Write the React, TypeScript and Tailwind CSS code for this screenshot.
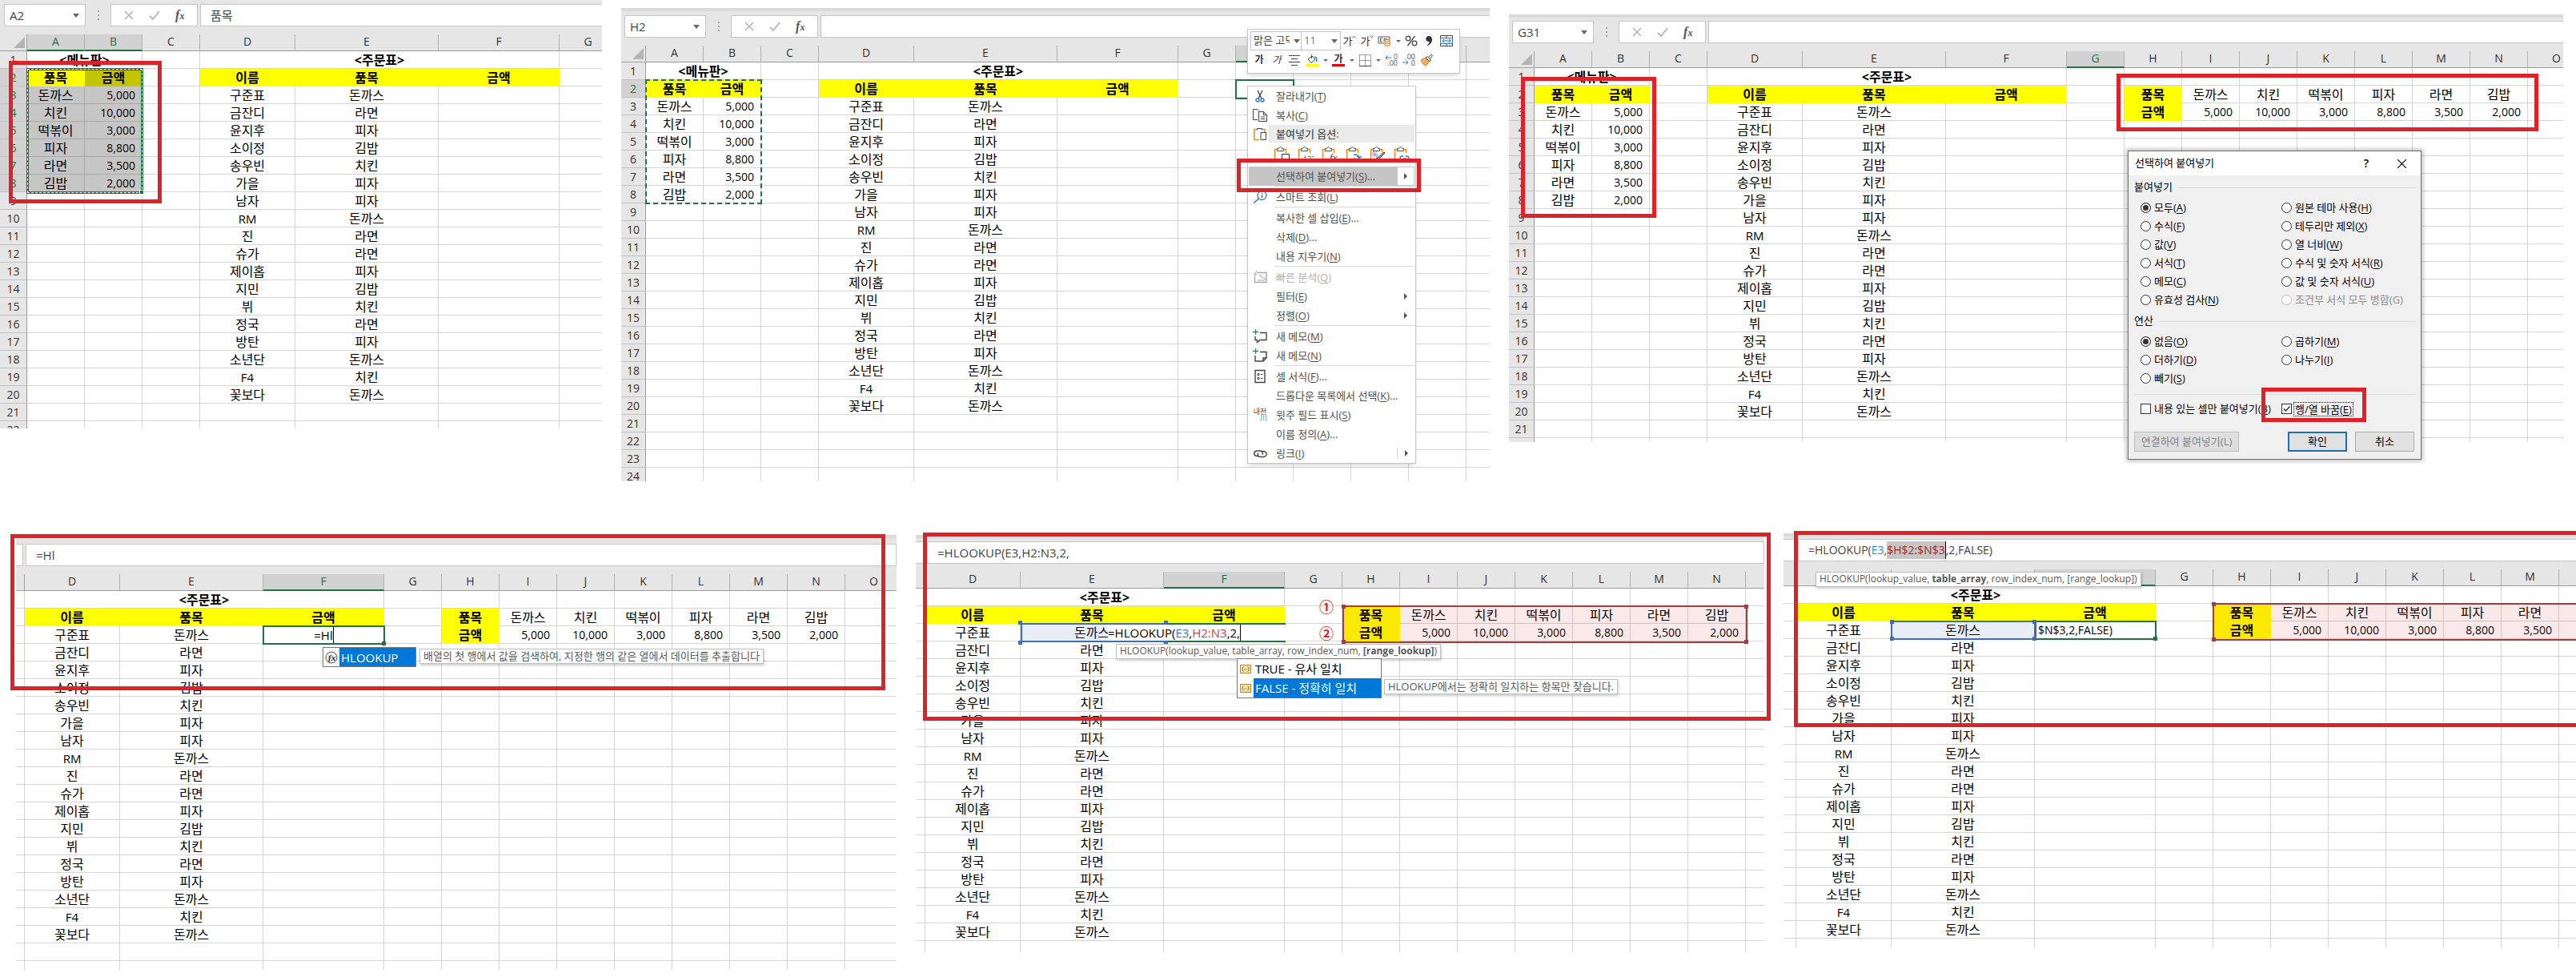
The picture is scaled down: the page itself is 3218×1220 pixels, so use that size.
import type { ReactNode } from "react";
import clsx from "clsx";

const names = ["구준표", "금잔디", "윤지후", "소이정", "송우빈", "가을", "남자", "RM", "진", "슈가", "제이홉", "지민", "뷔", "정국", "방탄", "소년단", "F4", "꽃보다"];
const orders = ["돈까스", "라면", "피자", "김밥", "치킨", "피자", "피자", "돈까스", "라면", "라면", "피자", "김밥", "치킨", "라면", "피자", "돈까스", "치킨", "돈까스"];
const menu = [
  ["돈까스", "5,000"],
  ["치킨", "10,000"],
  ["떡볶이", "3,000"],
  ["피자", "8,800"],
  ["라면", "3,500"],
  ["김밥", "2,000"],
];

const colWidths: Record<string, number> = { D: 119, E: 179, F: 151 };

type CellData = { text: string; head?: boolean; right?: boolean };

const getCell = (col: string, row: number, wide: boolean): CellData => {
  if (row === 2 && "ABDEF".includes(col)) {
    const heads: Record<string, string> = { A: "품목", B: "금액", D: "이름", E: "품목", F: "금액" };
    return { text: heads[col], head: true };
  }
  if (col === "A" && row >= 3 && row <= 8) return { text: menu[row - 3][0] };
  if (col === "B" && row >= 3 && row <= 8) return { text: menu[row - 3][1], right: true };
  if (col === "D" && row >= 3 && row <= 20) return { text: names[row - 3] };
  if (col === "E" && row >= 3 && row <= 20) return { text: orders[row - 3] };
  if (wide && (row === 2 || row === 3)) {
    if (col === "H") return { text: row === 2 ? "품목" : "금액", head: true };
    const i = "IJKLMN".indexOf(col);
    if (i >= 0) return { text: menu[i][row - 2], right: row === 3 };
  }
  return { text: "" };
};

type SheetProps = {
  label: string;
  // one letter per column, a space for the unnamed sliver at the right edge
  cols: string;
  // width of the row header, or of the cut column when there is no header
  lead: number;
  numbered?: boolean;
  rows: number;
  // height of the cut row at the bottom
  tail: number;
  wide?: boolean;
  activeCols?: string;
  activeRows?: number[];
  shaded?: boolean;
};

const Sheet = ({ label, cols, lead, numbered = false, rows, tail, wide = false, activeCols = "", activeRows = [], shaded = false }: SheetProps) => {
  const letters = cols.split("");
  const lines = Array.from({ length: rows + 1 }, (_, i) => i + 1);

  return (
    <table aria-label={label} className="w-full table-fixed border-separate border-spacing-0">
      <colgroup>
        <col style={{ width: lead }} />
        {letters.map((c) => (
          <col key={c} style={{ width: colWidths[c] ?? 72 }} />
        ))}
      </colgroup>
      <thead>
        <tr className="h-[21px]">
          <th className="h-[21px] border-r border-b border-[#a0a0a0] bg-[#e6e6e6] p-0">
            {numbered && (
              <svg viewBox="0 0 14 14" className="ml-auto mr-0.5 block h-3.5 w-3.5">
                <path d="M14 0v14H0z" fill="#b4b4b4" />
              </svg>
            )}
          </th>
          {letters.map((c) => (
            <th
              key={c}
              className={clsx(
                "h-[21px] border-r p-0 align-top text-sm leading-[18px] font-normal",
                activeCols.includes(c)
                  ? "border-b-2 border-r-[#b1b1b1] border-b-[#217346] bg-[#d2d2d2] text-[#217346]"
                  : "border-b border-r-[#b1b1b1] border-b-[#9b9b9b] bg-[#e6e6e6] text-[#333]",
              )}
            >
              {c}
            </th>
          ))}
        </tr>
      </thead>
      <tbody>
        {lines.map((row) => {
          const cut = row > rows;
          return (
            <tr key={row}>
              <th
                className={clsx(
                  "border-r p-0 align-top text-sm font-normal",
                  numbered && "border-b border-r-[#9b9b9b] border-b-[#c3c3c3]",
                  numbered && (activeRows.includes(row) ? "bg-[#d2d2d2] text-[#217346]" : "bg-[#e6e6e6] text-[#333]"),
                  !numbered && "border-b border-[#d4d4d4]",
                  cut && "border-b-0",
                )}
              >
                <div className="overflow-hidden leading-[21px]" style={{ height: cut ? tail : 21 }}>
                  {numbered && !(cut && tail < 6) ? row : ""}
                </div>
              </th>
              {letters.map((c) => {
                if (row === 1 && (c === "A" || c === "D")) {
                  return (
                    <td key={c} colSpan={c === "A" ? 2 : 3} className="border-r border-b border-[#d4d4d4] p-0 text-center text-base leading-5 font-bold">
                      {c === "A" ? "<메뉴판>" : "<주문표>"}
                    </td>
                  );
                }
                if (row === 1 && "BEF".includes(c)) return null;
                const cell = getCell(c, row, wide);
                const inRange = shaded && "AB".includes(c) && row >= 2 && row <= 8;
                return (
                  <td
                    key={c}
                    className={clsx(
                      "overflow-hidden border-r border-b p-0 leading-5 whitespace-nowrap",
                      cell.right ? "pr-2 text-right text-sm leading-5" : "text-center",
                      !cell.right && (/^[A-Z0-9]+$/.test(cell.text) ? "text-[15px]" : "text-base leading-5"),
                      cell.head && "font-bold",
                      inRange && cell.head && c === "B" && "border-[#c4c400] bg-[#c4c400]",
                      inRange && !cell.head && "border-[#a9a9a9] bg-[#c6c6c6]",
                      cell.head && !(inRange && c === "B") && "border-[#ffff00] bg-[#ffff00]",
                      !cell.head && !inRange && "border-[#d4d4d4]",
                      cut && "border-b-0",
                    )}
                  >
                    {cell.text}
                  </td>
                );
              })}
            </tr>
          );
        })}
      </tbody>
    </table>
  );
};

const Caret = ({ className = "" }: { className?: string }) => (
  <svg viewBox="0 0 8 5" className={clsx("h-[5px] w-2", className)}>
    <path d="M0 0h8L4 5z" fill="#666" />
  </svg>
);

const FormulaBar = ({ name, value }: { name: string; value: string }) => (
  <div className="flex h-7">
    <div className="relative w-[102px]">
      <input aria-label="이름 상자" readOnly value={name} className="h-7 w-full border border-[#c6c6c6] bg-white px-1.5 text-[15px] text-[#444]" />
      <Caret className="absolute top-3 right-2" />
    </div>
    <div className="flex w-[31px] flex-col items-center justify-center gap-[3px]">
      <i className="size-0.5 bg-[#a6a6a6]" />
      <i className="size-0.5 bg-[#a6a6a6]" />
      <i className="size-0.5 bg-[#a6a6a6]" />
    </div>
    <div className="flex w-[109px] items-center justify-around border border-[#c6c6c6] bg-white px-1.5">
      <button type="button" aria-label="취소">
        <svg viewBox="0 0 12 12" className="size-3" fill="none" stroke="#b5b5b5" strokeWidth="1.6">
          <path d="M1 1l10 10M11 1L1 11" />
        </svg>
      </button>
      <button type="button" aria-label="입력">
        <svg viewBox="0 0 14 12" className="h-3 w-3.5" fill="none" stroke="#b8b8b8" strokeWidth="2">
          <path d="M1 7l4 4 8-10" />
        </svg>
      </button>
      <button type="button" className="font-['Liberation_Serif',serif] text-base leading-5 font-bold text-[#555] italic">
        f<span className="text-xs">x</span>
      </button>
    </div>
    <input aria-label="수식 입력줄" readOnly value={value} className="ml-[3px] min-w-0 flex-1 border border-r-0 border-[#c6c6c6] bg-white px-3 text-[15px] text-[#444]" />
  </div>
);

// formula bar cut on its left side: the end of the button box, then the input
const CutBar = ({ children, lead }: { children: ReactNode; lead: string }) => (
  <div className="flex h-7">
    <div className={clsx("mr-[3px] border border-l-0 border-[#c6c6c6] bg-white", lead)} />
    {children}
  </div>
);

const RedBox = ({ className }: { className: string }) => (
  <div className={clsx("pointer-events-none absolute border-[5px] border-[#dc2329]", className)} />
);

const Handles = ({ color, right = true }: { color: string; right?: boolean }) => (
  <>
    <i className={clsx("absolute -top-[3px] -left-[3px] size-[5px]", color)} />
    <i className={clsx("absolute -bottom-[3px] -left-[3px] size-[5px]", color)} />
    {right && <i className={clsx("absolute -top-[3px] -right-[3px] size-[5px]", color)} />}
    {right && <i className={clsx("absolute -right-[3px] -bottom-[3px] size-[5px]", color)} />}
  </>
);

const Tip = ({ className, children }: { className: string; children: ReactNode }) => (
  <div className={clsx("absolute h-[19px] border border-[#bfbfbf] bg-white px-1 whitespace-nowrap text-[#595959] shadow-[1px_2px_3px_rgba(0,0,0,0.2)]", className)}>
    {children}
  </div>
);

const Hot = ({ children }: { children: string }) => <u className="underline-offset-2">{children}</u>;

/* ---- mini toolbar ---- */

const Tool = ({ label, children }: { label: string; children: ReactNode }) => (
  <button type="button" aria-label={label} className="flex h-6 w-[22px] items-center justify-center text-[15px] leading-none text-[#333]">
    {children}
  </button>
);

const DropArrow = () => (
  <span className="flex w-[11px] justify-center">
    <svg viewBox="0 0 6 3" className="h-[3px] w-1.5">
      <path d="M0 0h6L3 3z" fill="#666" />
    </svg>
  </span>
);

const MiniToolbar = () => (
  <div className="absolute top-[26px] left-[782px] h-[56px] w-[266px] border border-[#c6c6c6] bg-white px-[3px] pt-0.5 shadow-md">
    <div className="flex items-center">
      <div className="relative">
        <select aria-label="글꼴" className="block h-6 w-16 appearance-none overflow-hidden border border-[#c6c6c6] bg-white pr-3.5 pl-[3px] text-[13px] text-[#444]">
          <option>맑은 고딕</option>
        </select>
        <span className="pointer-events-none absolute top-2.5 right-0.5 flex"><Caret className="h-[3px] w-1.5" /></span>
      </div>
      <div className="relative">
        <select aria-label="글꼴 크기" className="-ml-px block h-6 w-[50px] appearance-none border border-[#c6c6c6] bg-white pl-[3px] text-[13px] text-[#777]">
          <option>11</option>
        </select>
        <span className="pointer-events-none absolute top-2.5 right-1 flex"><Caret className="h-[3px] w-1.5" /></span>
      </div>
      <Tool label="글꼴 크기 크게">
        <span className="text-[13px]">가</span>
        <svg viewBox="0 0 5 4" className="-mt-2.5 h-1 w-[5px]" fill="none" stroke="#2b7cd3"><path d="M.5 3.5l2-2.5 2 2.5" /></svg>
      </Tool>
      <Tool label="글꼴 크기 작게">
        <span className="text-[13px]">가</span>
        <svg viewBox="0 0 5 4" className="-mt-2.5 h-1 w-[5px]" fill="none" stroke="#2b7cd3"><path d="M.5.5l2 2.5 2-2.5" /></svg>
      </Tool>
      <Tool label="회계 표시 형식">
        <svg viewBox="0 0 18 14" className="h-3.5 w-[18px]" fill="none" stroke="#555">
          <path d="M8 10H1V2h14v3M6 4H3.500v4H6M8 8V4.500h3" />
          <path d="M9 6.500c0-2 6-2 6 0V12c0 2-6 2-6 0zM9 9c0 1.500 6 1.500 6 0" fill="#fff" stroke="#e8912d" strokeWidth="1.300" />
          <ellipse cx="12" cy="6.500" rx="3" ry="1.300" stroke="#e8912d" />
        </svg>
      </Tool>
      <DropArrow />
      <Tool label="백분율">
        <svg viewBox="0 0 16 14" className="h-3.5 w-4" fill="none" stroke="#444" strokeWidth="1.300">
          <circle cx="4" cy="4" r="2.800" /><circle cx="12" cy="10" r="2.800" /><path d="M12.500 1l-9 12" />
        </svg>
      </Tool>
      <Tool label="쉼표 스타일">
        <svg viewBox="0 0 8 12" className="h-3 w-2"><path d="M4 0a3.500 3.500 0 1 0 .5 6.900C4.500 9 3 10.500 1.500 11.200l.5.800C5.500 11 8 8 8 4.500 8 1.500 6.500 0 4 0z" fill="#333" /></svg>
      </Tool>
      <Tool label="병합하고 가운데 맞춤">
        <svg viewBox="0 0 16 14" className="h-3.5 w-4" fill="none">
          <path d="M.5.5h15v13H.5zM8 .5V3M8 11v2.500" stroke="#444" />
          <path d="M.5 3.500h15v7H.5z" fill="#e6f1fb" stroke="#2b7cd3" />
          <path d="M3 7h10M5 5L3 7l2 2M11 5l2 2-2 2" stroke="#2b7cd3" />
        </svg>
      </Tool>
    </div>
    <div className="flex items-center">
      <Tool label="굵게"><b className="text-[12px]">가</b></Tool>
      <Tool label="기울임꼴"><i className="text-[12px]">가</i></Tool>
      <Tool label="가운데 맞춤">
        <svg viewBox="0 0 14 13" className="h-[13px] w-3.5" stroke="#444"><path d="M0 .5h14M3 4.500h8M0 8.500h14M3 12.500h8" /></svg>
      </Tool>
      <Tool label="채우기 색">
        <svg viewBox="0 0 16 15" className="h-[15px] w-4" fill="none">
          <path d="M3 6l5-4 4 4-5 4.500zM7.500.500V5" stroke="#444" />
          <path d="M11 3c3 0 3 3 2.500 6" stroke="#2b7cd3" strokeWidth="1.600" />
          <path d="M0 12h16v3H0z" fill="#ffff00" />
        </svg>
      </Tool>
      <DropArrow />
      <Tool label="글꼴 색">
        <span className="flex w-4 flex-col items-center border-b-[3px] border-[#e00000] text-[12px] leading-3 font-bold">가</span>
      </Tool>
      <DropArrow />
      <Tool label="테두리">
        <svg viewBox="0 0 15 15" className="size-[15px]" fill="none" stroke="#444">
          <path d="M.5.5h14v14M.5.5v14M7.500.500v14M.5 7.500h14" strokeDasharray="1 1" /><path d="M0 14.500h15" />
        </svg>
      </Tool>
      <DropArrow />
      <Tool label="자릿수 늘림">
        <span className="relative block h-4 w-4 text-[9px] leading-2 text-[#555]">
          <svg viewBox="0 0 8 6" className="absolute top-0.5 left-0 h-1.5 w-2" fill="none" stroke="#2b7cd3"><path d="M8 3H1M3.500.500L1 3l2.500 2.500" /></svg>
          <span className="absolute top-0 right-0">0</span>
          <span className="absolute right-0 bottom-0">.00</span>
        </span>
      </Tool>
      <Tool label="자릿수 줄임">
        <span className="relative block h-4 w-4 text-[9px] leading-2 text-[#555]">
          <span className="absolute top-0 right-0">.00</span>
          <svg viewBox="0 0 8 6" className="absolute bottom-0.5 left-0 h-1.5 w-2" fill="none" stroke="#2b7cd3"><path d="M0 3h7M4.500.500L7 3 4.500 5.500" /></svg>
          <span className="absolute right-0 bottom-0">0</span>
        </span>
      </Tool>
      <Tool label="서식 복사">
        <svg viewBox="0 0 16 15" className="h-[15px] w-4" fill="none">
          <path d="M1 7l5-3 5 6-4 4c-2-1-5-3-6-7z" fill="#f3b06a" stroke="#e07a1f" />
          <path d="M7 4l5 5 1.500-2-4-4.500zM10 4l4-4 1.500 1.500L12 6" fill="#fff" stroke="#444" />
        </svg>
      </Tool>
    </div>
  </div>
);

/* ---- context menu ---- */

const Svg = ({ children }: { children: ReactNode }) => (
  <svg viewBox="0 0 18 18" className="size-[18px]" fill="none" stroke="#444">
    {children}
  </svg>
);

const Clipboard = ({ children }: { children?: ReactNode }) => (
  <svg viewBox="0 0 20 20" className="size-5" fill="none">
    <path d="M5 3.500H1.500v15H9M12 3.500h3.500V8" stroke="#e8912d" strokeWidth="1.600" />
    <path d="M4.500 5.500v-3h2c0-2.500 4-2.500 4 0h2v3z" fill="#fff" stroke="#555" />
    {children}
  </svg>
);

const icons = {
  cut: <Svg><path d="M6 2l5 10M12 2L7 12" strokeWidth="1.400" /><circle cx="6" cy="14" r="2" stroke="#2b7cd3" strokeWidth="1.400" /><circle cx="12" cy="14" r="2" stroke="#2b7cd3" strokeWidth="1.400" /></Svg>,
  copy: <Svg><path d="M6 14.500H.5v-13H6L8 3.500" /><path d="M7.500 4.500h6l4 4v8h-10zM13.500 4.500v4h4M10 11h5M10 13.500h5" fill="#fff" /></Svg>,
  paste: <Svg><path d="M5 3.500H2v13h6M12 3.500h3V7" stroke="#e8912d" strokeWidth="1.600" /><path d="M5.500 4.500v-2h6v2M10 7.500h6.500v9H10z" fill="#fff" /></Svg>,
  smart: <Svg><circle cx="11.500" cy="7" r="5.500" stroke="#2b7cd3" strokeWidth="1.300" /><path d="M7.500 11L1 16.500" stroke="#2b7cd3" strokeWidth="1.600" /><path d="M11.500 4v1.200M11.500 6.500V10" stroke="#333" /></Svg>,
  quick: <Svg><g stroke="#a8a8a8"><path d="M5 3.500h12v12H2.500V9" strokeWidth="1.400" /><path d="M6 13h9v-3h-4V7H8M5 1L1.500 5.500h3L2 9" /></g></Svg>,
  comment: <Svg><path d="M9 4.500h8v9H9l-3.500 3v-3H3V9" strokeWidth="1.400" /><path d="M3.500 0v7M0 3.500h7" stroke="#2e8b57" strokeWidth="1.300" /></Svg>,
  note: <Svg><path d="M9 4.500h8V12l-4 4H3V9M17 12h-4v4" strokeWidth="1.400" /><path d="M3.500 0v7M0 3.500h7" stroke="#2e8b57" strokeWidth="1.300" /></Svg>,
  format: <Svg><path d="M3 1.500h12v15H3z" strokeWidth="1.400" /><path d="M6 5.500h2v2H6zM6 10.500h2v2H6zM10 6.500h2.500M10 11.500h2.500" /></Svg>,
  link: <Svg><path d="M8 12.500H5a4 3.300 0 0 1 0-6.500h4a3.500 3.200 0 0 1 3 4.800" strokeWidth="1.400" /><path d="M10 6.500h3a4 3.300 0 0 1 0 7H9.500a3.500 3.200 0 0 1-3-4.800" strokeWidth="1.400" /></Svg>,
};

const Arrow = () => (
  <svg viewBox="0 0 4 8" className="h-2 w-1">
    <path d="M0 0l4 4-4 4z" fill="#555" />
  </svg>
);

type ItemProps = { icon?: ReactNode; text: string; hot: string; dots?: boolean; arrow?: boolean; split?: boolean; disabled?: boolean; active?: boolean };

const MenuItem = ({ icon, text, hot, dots, arrow, split, disabled, active }: ItemProps) => (
  <li role="none">
    <button
      type="button"
      role="menuitem"
      disabled={disabled}
      className={clsx(
        "flex h-6 w-full items-center gap-[11px] pl-[5px] text-[13px] leading-6 whitespace-nowrap",
        disabled ? "text-[#b1b1b1]" : "text-[#505050]",
        active && "bg-[#c5c5c5]",
      )}
    >
      <span className="w-[18px] shrink-0">{icon}</span>
      <span className="flex-1 text-left">
        {text}(<Hot>{hot}</Hot>){dots && "..."}
      </span>
      {arrow && (
        <span className={clsx("flex w-[22px] items-center justify-center", active && "h-6 border border-[#c5c5c5] bg-white", split && "h-3.5 border-l border-[#d4d4d4]")}>
          <Arrow />
        </span>
      )}
    </button>
  </li>
);

const Separator = () => <li role="separator" className="mb-px ml-8 h-px bg-[#d9d9d9]" />;

const ContextMenu = () => (
  <ul role="menu" className="absolute top-[97px] left-[782px] w-[211px] border border-[#c6c6c6] bg-white px-px shadow-md">
    <MenuItem icon={icons.cut} text="잘라내기" hot="T" />
    <MenuItem icon={icons.copy} text="복사" hot="C" />
    <li role="none" className="flex h-[22px] items-center pl-[5px] text-[13px] font-medium text-[#505050]">
      <span className="w-5">{icons.paste}</span>
      <span className="flex-1 bg-[#ebebeb] pl-[9px] leading-[22px]">붙여넣기 옵션:</span>
    </li>
    <li role="none" className="flex h-[30px] items-center gap-2.5 pl-[31px]">
      <button type="button" aria-label="붙여넣기"><Clipboard><path d="M10.500 9.500h9v9h-9z" stroke="#333" fill="#fff" /></Clipboard></button>
      <button type="button" aria-label="값"><Clipboard><text x="7" y="19" fontSize="9" fill="#444">123</text></Clipboard></button>
      <button type="button" aria-label="수식"><Clipboard><text x="10" y="18" fontSize="13" fontStyle="italic" fontFamily="Liberation Serif" fill="#333">fx</text></Clipboard></button>
      <button type="button" aria-label="바꾸기"><Clipboard><path d="M10 10c5 0 7 1 7 4M14.500 12l2.500 3 2.500-3M12 14l-2.500 2.500L12 19M10 16.500h4" stroke="#2b7cd3" strokeWidth="1.400" /></Clipboard></button>
      <button type="button" aria-label="서식"><Clipboard><text x="3" y="13" fontSize="9" fill="#2b7cd3">%</text><path d="M4 17c2 2 6 2 7-1l8-8-1-1-8 7c-2 0-3 3-6 3z" stroke="#333" fill="#8db8e0" /></Clipboard></button>
      <button type="button" aria-label="연결"><Clipboard><path d="M12 12h-1a2.500 2.500 0 0 0 0 6h5a2.500 2.500 0 0 0 0-6h-1M12 15h4" stroke="#4472c4" strokeWidth="1.400" /></Clipboard></button>
    </li>
    <MenuItem text="선택하여 붙여넣기" hot="S" dots arrow active />
    <Separator />
    <MenuItem icon={icons.smart} text="스마트 조회" hot="L" />
    <Separator />
    <MenuItem text="복사한 셀 삽입" hot="E" dots />
    <MenuItem text="삭제" hot="D" dots />
    <MenuItem text="내용 지우기" hot="N" />
    <Separator />
    <MenuItem icon={icons.quick} text="빠른 분석" hot="Q" disabled />
    <MenuItem text="필터" hot="E" arrow />
    <MenuItem text="정렬" hot="O" arrow />
    <Separator />
    <MenuItem icon={icons.comment} text="새 메모" hot="M" />
    <MenuItem icon={icons.note} text="새 메모" hot="N" />
    <Separator />
    <MenuItem icon={icons.format} text="셀 서식" hot="F" dots />
    <MenuItem text="드롭다운 목록에서 선택" hot="K" dots />
    <MenuItem
      icon={
        <span className="flex flex-col text-[9px] leading-[8px]">
          내천<span className="text-right text-[#2b8cb3]">川</span>
        </span>
      }
      text="윗주 필드 표시"
      hot="S"
    />
    <MenuItem text="이름 정의" hot="A" dots />
    <MenuItem icon={icons.link} text="링크" hot="I" arrow split />
  </ul>
);

/* ---- paste special dialog ---- */

const Radio = ({ group, text, hot, checked, disabled }: { group: string; text: string; hot: string; checked?: boolean; disabled?: boolean }) => (
  <label className={clsx("flex h-[23px] items-center gap-1", disabled && "text-[#8d8d8d]")}>
    <input
      type="radio"
      name={group}
      defaultChecked={checked}
      disabled={disabled}
      className="size-[13px] appearance-none rounded-full border border-[#333] bg-white checked:bg-[#333] checked:shadow-[inset_0_0_0_2px_white] disabled:border-[#c0c0c0]"
    />
    <span>
      {text}({disabled ? hot : <Hot>{hot}</Hot>})
    </span>
  </label>
);

const Legend = ({ children }: { children: string }) => (
  <div className="flex h-4 items-center gap-1.5">
    <span>{children}</span>
    <span className="h-px flex-1 bg-[#dcdcdc]" />
  </div>
);

const Dialog = () => (
  <div role="dialog" aria-label="선택하여 붙여넣기" className="absolute top-[170px] left-[773px] w-[367px] border border-[#707070] bg-[#f0f0f0] text-[13px] text-black shadow-[0_0_5px_2px_rgba(0,0,0,0.25)]">
    <div className="flex h-[30px] items-center bg-white pr-[18px] pl-2">
      <h2 className="flex-1">선택하여 붙여넣기</h2>
      <button type="button" className="mr-9 text-sm font-semibold">?</button>
      <button type="button" aria-label="닫기">
        <svg viewBox="0 0 11 11" className="size-[11px]" fill="none" stroke="#000" strokeWidth="1.200"><path d="M0 0l11 11M11 0L0 11" /></svg>
      </button>
    </div>
    <div className="px-[7px] pt-[7px] pb-[9px]">
      <Legend>붙여넣기</Legend>
      <div className="mt-1.5 grid grid-cols-[176px_1fr] pl-2">
        <div>
          <Radio group="paste" text="모두" hot="A" checked />
          <Radio group="paste" text="수식" hot="F" />
          <Radio group="paste" text="값" hot="V" />
          <Radio group="paste" text="서식" hot="T" />
          <Radio group="paste" text="메모" hot="C" />
          <Radio group="paste" text="유효성 검사" hot="N" />
        </div>
        <div>
          <Radio group="paste" text="원본 테마 사용" hot="H" />
          <Radio group="paste" text="테두리만 제외" hot="X" />
          <Radio group="paste" text="열 너비" hot="W" />
          <Radio group="paste" text="수식 및 숫자 서식" hot="R" />
          <Radio group="paste" text="값 및 숫자 서식" hot="U" />
          <Radio group="paste" text="조건부 서식 모두 병합" hot="G" disabled />
        </div>
      </div>
      <div className="mt-[7px]">
        <Legend>연산</Legend>
      </div>
      <div className="mt-1.5 grid grid-cols-[176px_1fr] pl-2">
        <div>
          <Radio group="op" text="없음" hot="O" checked />
          <Radio group="op" text="더하기" hot="D" />
          <Radio group="op" text="빼기" hot="S" />
        </div>
        <div>
          <Radio group="op" text="곱하기" hot="M" />
          <Radio group="op" text="나누기" hot="I" />
        </div>
      </div>
      <div className="mt-2 h-px bg-[#dcdcdc]" />
      <div className="mt-1.5 grid grid-cols-[176px_1fr] pl-2">
        <label className="flex h-[23px] items-center gap-1 whitespace-nowrap">
          <input type="checkbox" className="size-[13px] appearance-none border border-[#333] bg-white" />
          <span>내용 있는 셀만 붙여넣기(<Hot>B</Hot>)</span>
        </label>
        <label className="flex h-[23px] items-center gap-0.5 whitespace-nowrap">
          <span className="relative flex">
            <input type="checkbox" defaultChecked className="peer size-[13px] appearance-none border border-[#333] bg-white" />
            <svg viewBox="0 0 13 13" className="pointer-events-none absolute inset-0 hidden size-[13px] peer-checked:block" fill="none" stroke="#222" strokeWidth="1.300"><path d="M3 6.500L5.500 9 10.500 3.500" /></svg>
          </span>
          <span className="border border-dotted border-black px-px leading-4">행/열 바꿈(<Hot>E</Hot>)</span>
        </label>
      </div>
      <div className="mt-[17px] flex h-[25px]">
        <button type="button" disabled className="w-[131px] border border-[#bfbfbf] bg-[#dedede] text-[#838383]">연결하여 붙여넣기(L)</button>
        <button type="button" className="ml-auto w-[74px] border-2 border-[#1b6fb8] bg-[#e1e1e1]">확인</button>
        <button type="button" className="mr-px ml-2.5 w-[74px] border border-[#adadad] bg-[#e1e1e1]">취소</button>
      </div>
    </div>
  </div>
);

/* ---- formula autocomplete ---- */

const FxIcon = () => (
  <svg viewBox="0 0 16 16" className="size-4">
    <circle cx="8" cy="8" r="7" fill="#eee" stroke="#555" />
    <text x="4" y="12" fontSize="11" fontStyle="italic" fontWeight="bold" fontFamily="Liberation Serif" fill="#333">fx</text>
  </svg>
);

const EnumIcon = () => (
  <svg viewBox="0 0 14 11" className="h-[11px] w-3.5" fill="none" stroke="#6b5a2a">
    <path d="M.5.5h13v10H.5z" fill="#fbe3a0" stroke="#a98a45" />
    <path d="M4.500 2.500c-2 1.500-2 4.500 0 6M9.500 2.500c2 1.500 2 4.500 0 6M5.500 6h1M7.500 6h1" />
  </svg>
);

export default function App() {
  return (
    <main className="min-h-screen overflow-x-hidden bg-white font-['Open_Sans','Noto_Sans_CJK_KR',sans-serif] text-black">
      <div className="grid h-[666px] grid-cols-[752fr_1085fr_1317fr] items-start gap-6 pr-4">
        {/* 1: menu range copied */}
        <section className="relative min-w-0">
          <div className="overflow-hidden bg-[#e6e6e6] pt-[5px]">
            <div className="pl-[5px]">
              <FormulaBar name="A2" value="품목" />
            </div>
            <div className="mt-2.5 bg-white">
              <Sheet label="메뉴판과 주문표" cols="ABCDEFG" lead={34} numbered rows={21} tail={9} activeCols="AB" activeRows={[2, 3, 4, 5, 6, 7, 8]} shaded />
            </div>
          </div>
          <div className="absolute top-[85px] left-[33px] h-[157px] w-[146px] border-[3px] border-[#217346]">
            <div className="absolute -inset-0.5 border border-dashed border-white" />
            <i className="absolute -right-1 -bottom-1 size-1.5 border border-white bg-[#217346]" />
          </div>
          <RedBox className="top-[76px] left-[11px] h-[178px] w-[191px]" />
        </section>

        {/* 2: context menu */}
        <section className="relative mt-2.5 min-w-0">
          <div className="overflow-hidden border-t-4 border-[#dadada] bg-[#e6e6e6] pt-[5px]">
            <div className="pl-1">
              <FormulaBar name="H2" value="" />
            </div>
            <div className="mt-2.5 bg-white">
              <Sheet label="메뉴판과 주문표" cols="ABCDEFGHIJK " lead={31} numbered rows={23} tail={17} activeCols="H" activeRows={[2]} />
            </div>
          </div>
          <div className="absolute top-[89px] left-[30px] h-[156px] w-[146px] border-2 border-dashed border-[#217346]" />
          <div className="absolute top-[89px] left-[767px] h-[25px] w-[74px] border-2 border-[#217346]" />
          <MiniToolbar />
          <ContextMenu />
          <RedBox className="top-[188px] left-[769px] h-[42px] w-[230px]" />
        </section>

        {/* 3: paste special */}
        <section className="relative mt-[18px] min-w-0">
          <div className="overflow-hidden border-t-4 border-[#dadada] bg-[#e6e6e6] pt-1">
            <div className="pl-1">
              <FormulaBar name="G31" value="" />
            </div>
            <div className="mt-2.5 bg-white">
              <Sheet label="행과 열을 바꾼 메뉴판" cols="ABCDEFGHIJKLMNO" lead={32} numbered rows={21} tail={5} wide activeCols="G" />
            </div>
          </div>
          <RedBox className="top-[78px] left-[15px] h-[176px] w-[169px]" />
          <RedBox className="top-[74px] left-[759px] h-[72px] w-[527px]" />
          <Dialog />
          <RedBox className="top-[466px] left-[940px] h-[43px] w-[131px]" />
        </section>
      </div>

      <div className="grid grid-cols-[1100fr_1060fr_990fr] items-start gap-6 pl-5">
        {/* 4: typing the function name */}
        <section className="relative mt-0.5 min-w-0">
          <div className="overflow-hidden border-t-4 border-[#dadada] bg-[#e6e6e6] pt-[7px]">
            <CutBar lead="w-[9px]">
              <input aria-label="수식 입력줄" readOnly value="=Hl" className="min-w-0 flex-1 border border-[#c6c6c6] bg-white px-3 text-[15px] text-[#444]" />
            </CutBar>
            <div className="mt-2.5 bg-white">
              <Sheet label="주문표" cols="DEFGHIJKLMNO" lead={11} rows={21} tail={11} wide activeCols="F" />
            </div>
          </div>
          <div className="absolute top-[113px] left-[308px] h-[24px] w-[153px] border-2 border-[#217346] bg-white text-center text-[15px] leading-5">
            =Hl<span className="border-l border-black" />
            <i className="absolute -right-[3px] -bottom-[3px] size-[5px] bg-[#217346]" />
          </div>
          <div className="absolute top-[140px] left-[383px] flex h-[25px] w-[117px] items-stretch border border-[#777] bg-white">
            <span className="flex w-5 items-center justify-center"><FxIcon /></span>
            <span className="flex-1 bg-[#0078d7] pl-0.5 text-[15px] leading-6 text-white">HLOOKUP</span>
          </div>
          <Tip className="top-[142px] left-[504px] text-[13px] leading-4">배열의 첫 행에서 값을 검색하여, 지정한 행의 같은 열에서 데이터를 추출합니다</Tip>
          <RedBox className="-top-px -left-[7px] h-[195px] w-[1093px]" />
        </section>

        {/* 5: choosing the match type */}
        <section className="relative mt-0.5 min-w-0">
          <div className="overflow-hidden border-t-4 border-[#dadada] bg-[#e6e6e6] pt-1">
            <CutBar lead="w-[11px]">
              <input aria-label="수식 입력줄" readOnly value="=HLOOKUP(E3,H2:N3,2," className="min-w-0 flex-1 border border-[#c6c6c6] bg-white px-3 text-[15px] text-[#444]" />
            </CutBar>
            <div className="mt-2.5 bg-white">
              <Sheet label="주문표" cols="DEFGHIJKLMN " lead={12} rows={20} tail={14} wide activeCols="F" />
            </div>
          </div>
          <div className="absolute top-[110px] left-[131px] h-[24px] w-[181px] border-2 border-[#3f6fb5] bg-[#3f6fb5]/12" />
          <div className="absolute top-[110px] left-[311px] h-[24px] w-[151px] border-y-2 border-[#217346]" />
          <div className="absolute top-[112px] left-[240px] h-5 w-[221px] bg-white text-[15px] leading-5 whitespace-nowrap">
            =HLOOKUP(<span className="text-[#3f6fb5]">E3</span>,<span className="text-[#b5484b]">H2:N3</span>,2,<span className="border-l border-black" />
          </div>
          <div className="absolute top-[110px] left-[131px] h-[24px] w-[181px]">
            <Handles color="bg-[#3f6fb5]" />
          </div>
          <div className="absolute top-[88px] left-[533px] h-[47px] w-[506px] border-2 border-[#a33d42] bg-[#c02828]/10">
            <Handles color="bg-[#a33d42]" />
          </div>
          <span className="absolute top-[78px] left-[504px] text-[18px] leading-6 font-bold text-[#dc2329]">①</span>
          <span className="absolute top-[111px] left-[504px] text-[18px] leading-6 font-bold text-[#dc2329]">②</span>
          <Tip className="top-[136px] left-[250px] text-xs leading-4">
            HLOOKUP(lookup_value, table_array, row_index_num, <b>[range_lookup]</b>)
          </Tip>
          <ul className="absolute top-[154px] left-[401px] w-[181px] border border-[#777] bg-white text-[15px] leading-6">
            <li className="flex">
              <span className="flex w-5 items-center justify-center"><EnumIcon /></span>
              <span className="flex-1 pl-0.5">TRUE - 유사 일치</span>
            </li>
            <li className="flex">
              <span className="flex w-5 items-center justify-center"><EnumIcon /></span>
              <span className="flex-1 bg-[#0078d7] pl-0.5 text-white">FALSE - 정확히 일치</span>
            </li>
          </ul>
          <Tip className="top-[180px] left-[585px] text-[13px] leading-4">HLOOKUP에서는 정확히 일치하는 항목만 찾습니다.</Tip>
          <RedBox className="-top-[3px] left-[9px] h-[235px] w-[1059px]" />
        </section>

        {/* 6: absolute reference */}
        <section className="relative min-w-0">
          <div className="overflow-hidden border-t-4 border-[#dadada] bg-[#e6e6e6] pt-[3px]">
            <CutBar lead="w-[15px]">
              <div role="textbox" aria-label="수식 입력줄" className="flex flex-1 items-center border border-r-0 border-[#c6c6c6] bg-white px-3 text-sm leading-[22px] text-[#444]">
                =HLOOKUP(<span className="text-[#3a86b5]">E3</span>,<span className="border-r border-black bg-[#c6c6c6] text-[#b02428]">$H$2:$N$3</span>,2,FALSE)
              </div>
            </CutBar>
            <div className="mt-2.5 bg-white">
              <Sheet label="주문표" cols="DEFGHIJKLM " lead={16} rows={20} tail={12} wide activeCols="F" />
            </div>
          </div>
          <div className="absolute top-[109px] left-[314px] h-[24px] w-[152px] border-2 border-[#217346] bg-white pl-0.5 text-sm leading-5">
            $N$3,2,FALSE)
            <i className="absolute -right-[3px] -bottom-[3px] size-[5px] bg-[#217346]" />
          </div>
          <div className="absolute top-[109px] left-[134px] h-[24px] w-[181px] border-2 border-[#3f6fb5] bg-[#3f6fb5]/12">
            <Handles color="bg-[#3f6fb5]" />
          </div>
          <div className="absolute top-[87px] right-0 left-[536px] h-[47px] border-2 border-r-0 border-[#a33d42] bg-[#c02828]/10">
            <Handles color="bg-[#a33d42]" right={false} />
          </div>
          <Tip className="top-12 left-10 text-xs leading-4">
            HLOOKUP(lookup_value, <b>table_array</b>, row_index_num, [range_lookup])
          </Tip>
          <RedBox className="-top-[3px] right-0 left-[13px] h-[245px] border-r-0" />
        </section>
      </div>
    </main>
  );
}
